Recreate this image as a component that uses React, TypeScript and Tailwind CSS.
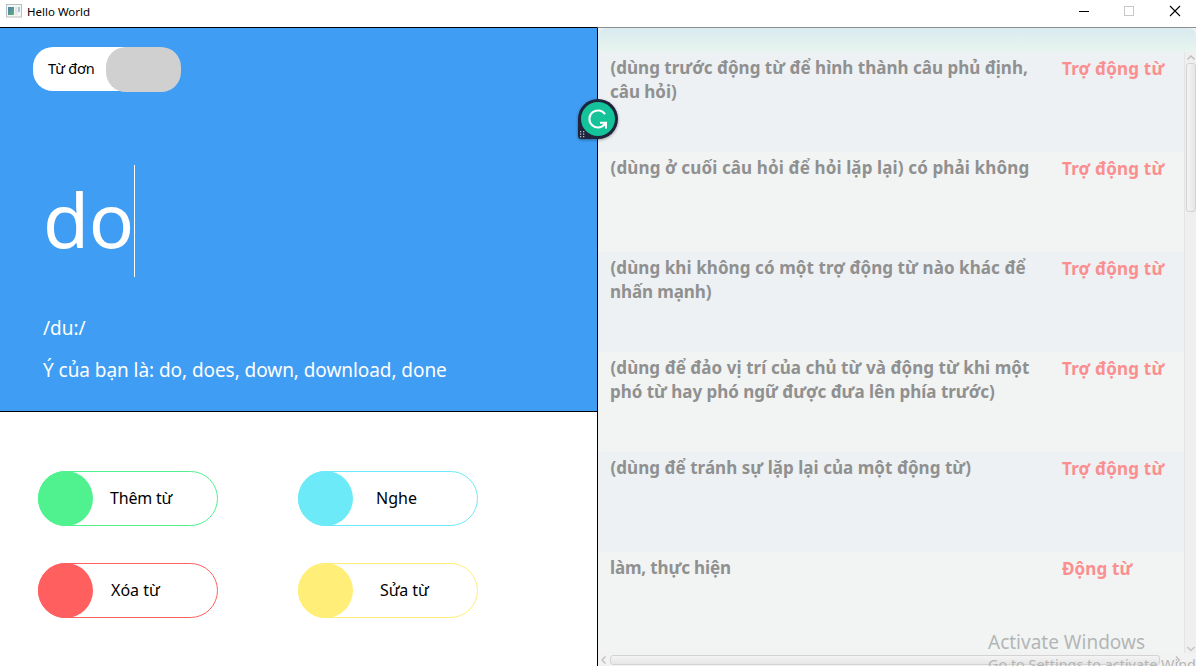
import React from "react";

type Entry = { lines: { text: string; tracking: string }[]; kind: string; kindTracking: string };

const entries: Entry[] = [
  { lines: [{ text: "(dùng trước động từ để hình thành câu phủ định,", tracking: "tracking-[0.01px]" }, { text: "câu hỏi)", tracking: "tracking-[-0.03px]" }], kind: "Trợ động từ", kindTracking: "tracking-[0.2px]" },
  { lines: [{ text: "(dùng ở cuối câu hỏi để hỏi lặp lại) có phải không", tracking: "tracking-[0.13px]" }], kind: "Trợ động từ", kindTracking: "tracking-[0.2px]" },
  { lines: [{ text: "(dùng khi không có một trợ động từ nào khác để", tracking: "tracking-[0.08px]" }, { text: "nhấn mạnh)", tracking: "tracking-[-0.1px]" }], kind: "Trợ động từ", kindTracking: "tracking-[0.2px]" },
  { lines: [{ text: "(dùng để đảo vị trí của chủ từ và động từ khi một", tracking: "tracking-[0.06px]" }, { text: "phó từ hay phó ngữ được đưa lên phía trước)", tracking: "tracking-[-0.03px]" }], kind: "Trợ động từ", kindTracking: "tracking-[0.2px]" },
  { lines: [{ text: "(dùng để tránh sự lặp lại của một động từ)", tracking: "tracking-[0.04px]" }], kind: "Trợ động từ", kindTracking: "tracking-[0.2px]" },
  { lines: [{ text: "làm, thực hiện", tracking: "tracking-[-0.15px]" }], kind: "Động từ", kindTracking: "tracking-[0.15px]" },
];

const actions = [
  { label: "Thêm từ", border: "border-[#4ff28f]", fill: "bg-[#4ff28f]", text: "pl-[17px] tracking-[-0.2px]" },
  { label: "Nghe", border: "border-[#6ceaf7]", fill: "bg-[#6ceaf7]", text: "pl-[23px]" },
  { label: "Xóa từ", border: "border-[#ff5f5f]", fill: "bg-[#ff5f5f]", text: "pl-[18px]" },
  { label: "Sửa từ", border: "border-[#ffee77]", fill: "bg-[#ffee77]", text: "pl-[27px] tracking-[-0.1px]" },
];

function TitleBar() {
  return (
    <header className="flex h-[27px] shrink-0 items-start bg-white">
      <svg className="ml-[6px] mt-[4px]" width="16" height="14" viewBox="0 0 16 14">
        <defs>
          <linearGradient id="appicon" x1="0" y1="0" x2="1" y2="1">
            <stop offset="0" stopColor="#4c7fae" />
            <stop offset="1" stopColor="#62b36e" />
          </linearGradient>
        </defs>
        <rect x="0.5" y="0.5" width="15" height="12.5" fill="#f5f6f6" stroke="#b9bec3" />
        <rect x="2" y="3" width="6" height="8" fill="url(#appicon)" />
        <rect x="9" y="3" width="2.5" height="8" fill="#e4e6e8" />
        <rect x="12" y="3" width="2" height="5" fill="#a9c6d4" />
      </svg>
      <span className="ml-[5px] mt-[4px] text-[11.5px] leading-4 text-black">Hello World</span>
      <div className="ml-auto mr-[15px] flex items-start gap-[34px] pt-[5px]">
        <svg width="11" height="12" viewBox="0 0 11 12"><path d="M1 6.5H11" stroke="#000" /></svg>
        <svg width="12" height="12" viewBox="0 0 12 12"><rect x="1.5" y="1.5" width="9" height="9" fill="none" stroke="#c8c8c8" /></svg>
        <svg width="12" height="12" viewBox="0 0 12 12"><path d="M1 1L11 11M11 1L1 11" stroke="#000" strokeWidth="1.1" /></svg>
      </div>
    </header>
  );
}

function SearchPanel() {
  return (
    <section className="flex h-[385px] shrink-0 flex-col border-y border-black bg-[#3f9df4] text-white">
      <div className="ml-[33px] mt-[19px] flex h-[45px] w-[148px] items-start">
        <div className="flex h-[44px] w-[110px] items-center rounded-l-[20px] bg-white pl-[15px] text-[14.5px] tracking-[-0.2px] text-black">
          <span>Từ đơn</span>
        </div>
        <div className="-ml-[37px] h-[45px] w-[75px] shrink-0 rounded-[20px] bg-[#d0d0d0]" />
      </div>
      <div className="ml-[43px] mt-[73px] flex h-[112px] w-[92px] items-center justify-between">
        <span className="-mt-1 text-[75px] leading-[112px] tracking-[-0.5px]">do</span>
        <i className="h-[112px] w-px bg-white" />
      </div>
      <p className="ml-[43px] mt-[39px] text-[19px] leading-6">/du:/</p>
      <p className="ml-[43px] mt-[18px] whitespace-nowrap text-[19px] leading-6 tracking-[-0.06px]">Ý của bạn là: do, does, down, download, done</p>
    </section>
  );
}

function Actions() {
  return (
    <section className="grid grid-cols-[180px_180px] gap-x-20 gap-y-[37px] pl-[38px] pt-[59px]">
      {actions.map((a) => (
        <button key={a.label} className={`flex h-[55px] items-center rounded-full border bg-white ${a.border}`}>
          <span className={`-ml-px size-[55px] shrink-0 rounded-full ${a.fill}`} />
          <span className={`pb-[2px] text-[16px] text-black ${a.text}`}>{a.label}</span>
        </button>
      ))}
    </section>
  );
}

function Results() {
  return (
    <section className="flex min-w-0 flex-1 flex-col border-l border-t border-l-black border-t-[#8a9092] bg-[#f0f2f2]">
      <div className="h-6 shrink-0 rounded-t-lg bg-linear-to-b from-[#d9ebf0] to-[#e8f4ee]" />
      <div className="flex h-[601px]">
        <div className="w-[586px] overflow-hidden">
          {entries.map((e, i) => (
            <div key={i} className={`flex h-[100px] pl-[12px] pt-1 text-[17px] font-bold leading-6 ${i % 2 ? "bg-[#f1f4f3]" : "bg-[#edf1f3]"}`}>
              <div className="w-[452px] shrink-0 text-[#909090]">
                {e.lines.map((l) => (
                  <p key={l.text} className={`whitespace-nowrap ${l.text.startsWith("(") ? "pl-[0.5px]" : ""}`}><span className={l.tracking}>{l.text}</span></p>
                ))}
              </div>
              <p className="whitespace-nowrap pt-px text-[#fb8f8f]"><span className={e.kindTracking}>{e.kind}</span></p>
            </div>
          ))}
        </div>
        <div className="flex w-3 flex-col items-center border-l border-[#e3e4e4] bg-[#efefef]">
          <svg className="mt-px" width="10" height="10" viewBox="0 0 10 10"><path d="M1.5 6.5L5 3L8.5 6.5" fill="none" stroke="#bcbcbc" strokeWidth="1.3" /></svg>
          <div className="h-[149px] w-[10px] rounded-[3px] border border-[#d3d3d3] bg-linear-to-r from-[#f4f4f4] to-[#e6e6e6]" />
          <svg className="mt-auto" width="10" height="10" viewBox="0 0 10 10"><path d="M1.5 4L5 7.5L8.5 4" fill="none" stroke="#c4c4c4" strokeWidth="1.3" /></svg>
        </div>
      </div>
      <div className="flex min-h-0 flex-1 items-start bg-[#f2f2f2] pt-[2px]">
        <svg className="ml-px" width="10" height="10" viewBox="0 0 10 10"><path d="M6.5 1.5L3 5L6.5 8.5" fill="none" stroke="#bcbcbc" strokeWidth="1.2" /></svg>
        <div className="ml-px h-[10px] w-[550px] rounded-[3px] border border-[#d3d3d3] bg-linear-to-b from-[#f4f4f4] to-[#e6e6e6]" />
        <svg className="ml-auto mr-[13px]" width="10" height="10" viewBox="0 0 10 10"><path d="M3 1.5L6.5 5L3 8.5" fill="none" stroke="#bcbcbc" strokeWidth="1.2" /></svg>
      </div>
    </section>
  );
}

function Grammarly() {
  return (
    <svg className="absolute left-[574px] top-[95px]" width="48" height="50" viewBox="574 95 48 50">
      <g style={{ filter: "drop-shadow(0 1px 1.5px rgba(0,0,0,.35))" }}>
        <path d="M598 99a20 20 0 1 1 0 40H581.5a3.5 3.5 0 0 1-3.500-3.500V119a20 20 0 0 1 20-20Z" fill="#1f243c" />
      </g>
      <circle cx="598" cy="119" r="17" fill="#15c39a" />
      <path d="M605 114.200A8.500 8.500 0 1 0 604.500 124.300" fill="none" stroke="#fff" strokeWidth="2" />
      <path d="M600 121.700H607V128.500H605V125.200L603.500 126.400L602 125.200L603.800 123.700H600Z" fill="#fff" />
      <g fill="#b9bbc5">
        <rect x="580" y="131" width="1.3" height="1.3" /><rect x="583" y="131" width="1.3" height="1.3" />
        <rect x="580" y="133.5" width="1.3" height="1.3" /><rect x="583" y="133.5" width="1.3" height="1.3" />
        <rect x="580" y="136" width="1.3" height="1.3" /><rect x="583" y="136" width="1.3" height="1.3" />
      </g>
    </svg>
  );
}

export default function App() {
  return (
    <div className="relative flex h-[666px] w-[1196px] flex-col overflow-hidden bg-white font-['Noto_Sans',sans-serif]">
      <TitleBar />
      <main className="flex min-h-0 flex-1">
        <div className="flex w-[597px] shrink-0 flex-col">
          <SearchPanel />
          <Actions />
        </div>
        <Results />
      </main>
      <Grammarly />
      <div className="pointer-events-none absolute left-[988px] top-[629px] whitespace-nowrap text-[#b4b6b6]">
        <p className="text-[19px] leading-[26px]">Activate Windows</p>
        <p className="text-[14.4px] leading-5">Go to Settings to activate Windows.</p>
      </div>
    </div>
  );
}
